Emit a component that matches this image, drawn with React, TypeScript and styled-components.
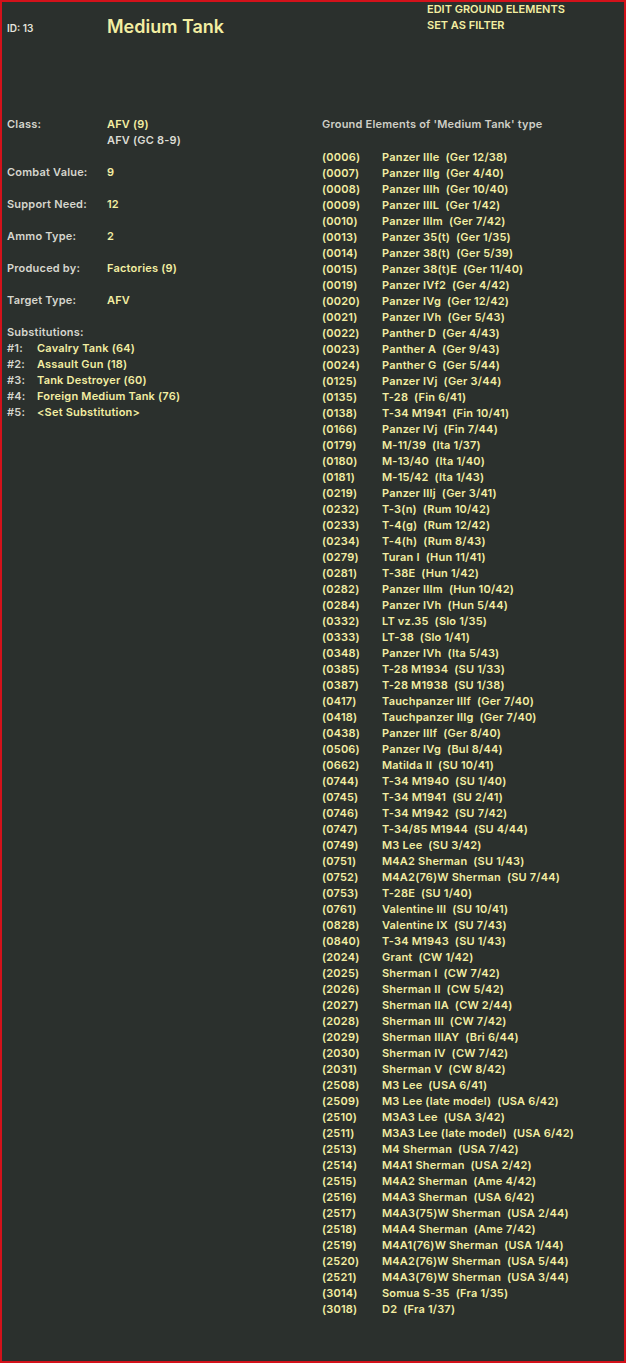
import React from "react";
import styled, { createGlobalStyle } from "styled-components";

const GlobalStyle = createGlobalStyle`
  html, body { margin: 0; padding: 0; background: #2b302d; }
  body { font-family: Inter, "Open Sans", "Liberation Sans", sans-serif; }
`;

const Frame = styled.div`
  box-sizing: border-box;
  width: 626px;
  height: 1363px;
  border: 2px solid #d3121b;
  background: #2b302d;
  padding: 0 0 0 5px;
  color: #d6d6ce;
  font-weight: 600;
  font-size: 11px;
  line-height: 16px;
  letter-spacing: 0.2px;
`;

const Header = styled.header`
  display: grid;
  grid-template-columns: 100px 320px 1fr;
  height: 114px;
`;

const IdTag = styled.div`
  font-size: 10px;
  line-height: 16px;
  margin-top: 18px;
  color: #e4e4dc;
  letter-spacing: 0;
`;

const Title = styled.h1`
  margin: 13px 0 0;
  font-size: 18px;
  line-height: 24px;
  font-weight: 600;
  letter-spacing: 0;
  color: #f3eea2;
`;

const Actions = styled.div`
  display: flex;
  flex-direction: column;
  line-height: 16px;
  margin-top: -1px;
`;

const ActionLink = styled.span`
  font-size: 11px;
  color: #f3eea2;
  letter-spacing: 0;
  cursor: pointer;
`;

const Body = styled.div`
  display: grid;
  grid-template-columns: 315px 1fr;
`;

const LeftColumn = styled.div`
  display: flex;
  flex-direction: column;
  gap: 16px;
`;

const Field = styled.div`
  display: grid;
  grid-template-columns: 100px 1fr;
`;

const Label = styled.span`
  color: #d6d6ce;
`;

const Values = styled.div`
  display: flex;
  flex-direction: column;
`;

const Value = styled.span<{ $muted?: boolean }>`
  color: ${(p) => (p.$muted ? "#dcdcd4" : "#f3eea2")};
`;

const SubList = styled.div`
  display: flex;
  flex-direction: column;
`;

const SubRow = styled.div`
  display: grid;
  grid-template-columns: 30px 1fr;
`;

const SubIndex = styled.span`
  color: #d6d6ce;
`;

const RightColumn = styled.div`
  display: flex;
  flex-direction: column;
  gap: 17px;
`;

const ListHeading = styled.div`
  color: #cfcfc7;
`;

const ElementList = styled.div`
  display: flex;
  flex-direction: column;
`;

const ElementRow = styled.div`
  display: grid;
  grid-template-columns: 60px 1fr;
  color: #f3eea2;
  white-space: pre;
`;

const elements: [string, string][] = [
  ["0006", "Panzer IIIe  (Ger 12/38)"],
  ["0007", "Panzer IIIg  (Ger 4/40)"],
  ["0008", "Panzer IIIh  (Ger 10/40)"],
  ["0009", "Panzer IIIL  (Ger 1/42)"],
  ["0010", "Panzer IIIm  (Ger 7/42)"],
  ["0013", "Panzer 35(t)  (Ger 1/35)"],
  ["0014", "Panzer 38(t)  (Ger 5/39)"],
  ["0015", "Panzer 38(t)E  (Ger 11/40)"],
  ["0019", "Panzer IVf2  (Ger 4/42)"],
  ["0020", "Panzer IVg  (Ger 12/42)"],
  ["0021", "Panzer IVh  (Ger 5/43)"],
  ["0022", "Panther D  (Ger 4/43)"],
  ["0023", "Panther A  (Ger 9/43)"],
  ["0024", "Panther G  (Ger 5/44)"],
  ["0125", "Panzer IVj  (Ger 3/44)"],
  ["0135", "T-28  (Fin 6/41)"],
  ["0138", "T-34 M1941  (Fin 10/41)"],
  ["0166", "Panzer IVj  (Fin 7/44)"],
  ["0179", "M-11/39  (Ita 1/37)"],
  ["0180", "M-13/40  (Ita 1/40)"],
  ["0181", "M-15/42  (Ita 1/43)"],
  ["0219", "Panzer IIIj  (Ger 3/41)"],
  ["0232", "T-3(n)  (Rum 10/42)"],
  ["0233", "T-4(g)  (Rum 12/42)"],
  ["0234", "T-4(h)  (Rum 8/43)"],
  ["0279", "Turan I  (Hun 11/41)"],
  ["0281", "T-38E  (Hun 1/42)"],
  ["0282", "Panzer IIIm  (Hun 10/42)"],
  ["0284", "Panzer IVh  (Hun 5/44)"],
  ["0332", "LT vz.35  (Slo 1/35)"],
  ["0333", "LT-38  (Slo 1/41)"],
  ["0348", "Panzer IVh  (Ita 5/43)"],
  ["0385", "T-28 M1934  (SU 1/33)"],
  ["0387", "T-28 M1938  (SU 1/38)"],
  ["0417", "Tauchpanzer IIIf  (Ger 7/40)"],
  ["0418", "Tauchpanzer IIIg  (Ger 7/40)"],
  ["0438", "Panzer IIIf  (Ger 8/40)"],
  ["0506", "Panzer IVg  (Bul 8/44)"],
  ["0662", "Matilda II  (SU 10/41)"],
  ["0744", "T-34 M1940  (SU 1/40)"],
  ["0745", "T-34 M1941  (SU 2/41)"],
  ["0746", "T-34 M1942  (SU 7/42)"],
  ["0747", "T-34/85 M1944  (SU 4/44)"],
  ["0749", "M3 Lee  (SU 3/42)"],
  ["0751", "M4A2 Sherman  (SU 1/43)"],
  ["0752", "M4A2(76)W Sherman  (SU 7/44)"],
  ["0753", "T-28E  (SU 1/40)"],
  ["0761", "Valentine III  (SU 10/41)"],
  ["0828", "Valentine IX  (SU 7/43)"],
  ["0840", "T-34 M1943  (SU 1/43)"],
  ["2024", "Grant  (CW 1/42)"],
  ["2025", "Sherman I  (CW 7/42)"],
  ["2026", "Sherman II  (CW 5/42)"],
  ["2027", "Sherman IIA  (CW 2/44)"],
  ["2028", "Sherman III  (CW 7/42)"],
  ["2029", "Sherman IIIAY  (Bri 6/44)"],
  ["2030", "Sherman IV  (CW 7/42)"],
  ["2031", "Sherman V  (CW 8/42)"],
  ["2508", "M3 Lee  (USA 6/41)"],
  ["2509", "M3 Lee (late model)  (USA 6/42)"],
  ["2510", "M3A3 Lee  (USA 3/42)"],
  ["2511", "M3A3 Lee (late model)  (USA 6/42)"],
  ["2513", "M4 Sherman  (USA 7/42)"],
  ["2514", "M4A1 Sherman  (USA 2/42)"],
  ["2515", "M4A2 Sherman  (Ame 4/42)"],
  ["2516", "M4A3 Sherman  (USA 6/42)"],
  ["2517", "M4A3(75)W Sherman  (USA 2/44)"],
  ["2518", "M4A4 Sherman  (Ame 7/42)"],
  ["2519", "M4A1(76)W Sherman  (USA 1/44)"],
  ["2520", "M4A2(76)W Sherman  (USA 5/44)"],
  ["2521", "M4A3(76)W Sherman  (USA 3/44)"],
  ["3014", "Somua S-35  (Fra 1/35)"],
  ["3018", "D2  (Fra 1/37)"],
];

const substitutions = [
  "Cavalry Tank (64)",
  "Assault Gun (18)",
  "Tank Destroyer (60)",
  "Foreign Medium Tank (76)",
  "<Set Substitution>",
];

export default function App() {
  return (
    <>
      <GlobalStyle />
      <Frame>
        <Header>
          <IdTag>ID: 13</IdTag>
          <Title>Medium Tank</Title>
          <Actions>
            <ActionLink>EDIT GROUND ELEMENTS</ActionLink>
            <ActionLink>SET AS FILTER</ActionLink>
          </Actions>
        </Header>
        <Body>
          <LeftColumn>
            <Field>
              <Label>Class:</Label>
              <Values>
                <Value>AFV (9)</Value>
                <Value $muted>AFV (GC 8-9)</Value>
              </Values>
            </Field>
            <Field>
              <Label>Combat Value:</Label>
              <Value>9</Value>
            </Field>
            <Field>
              <Label>Support Need:</Label>
              <Value>12</Value>
            </Field>
            <Field>
              <Label>Ammo Type:</Label>
              <Value>2</Value>
            </Field>
            <Field>
              <Label>Produced by:</Label>
              <Value>Factories (9)</Value>
            </Field>
            <Field>
              <Label>Target Type:</Label>
              <Value>AFV</Value>
            </Field>
            <SubList>
              <Label>Substitutions:</Label>
              {substitutions.map((s, i) => (
                <SubRow key={s}>
                  <SubIndex>#{i + 1}:</SubIndex>
                  <Value>{s}</Value>
                </SubRow>
              ))}
            </SubList>
          </LeftColumn>
          <RightColumn>
            <ListHeading>Ground Elements of 'Medium Tank' type</ListHeading>
            <ElementList>
              {elements.map(([code, name]) => (
                <ElementRow key={code}>
                  <span>({code})</span>
                  <span>{name}</span>
                </ElementRow>
              ))}
            </ElementList>
          </RightColumn>
        </Body>
      </Frame>
    </>
  );
}
